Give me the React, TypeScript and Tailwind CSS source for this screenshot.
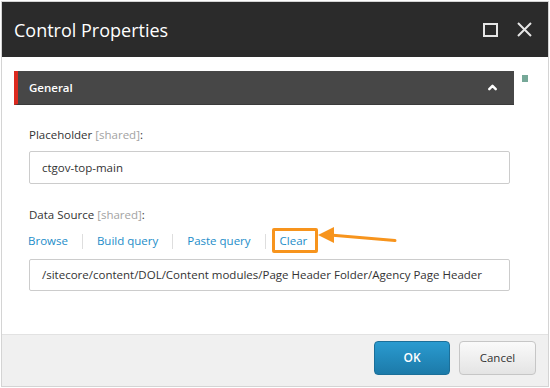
import { ChevronUp } from "lucide-react";

const font = { fontFamily: '"Open Sans", "Liberation Sans", sans-serif' };

function Label({ text }: { text: string }) {
  return (
    <div className="text-[11.5px] leading-[17px] text-[#333]">
      {text} <span className="text-[#a3a3a3]">[shared]</span>:
    </div>
  );
}

export default function App() {
  const links = ["Browse", "Build query", "Paste query", "Clear"];

  return (
    <div className="w-[550px] h-[388px] bg-white p-px" style={font}>
      <div className="h-full flex flex-col border border-[#d4d4d4]">
        {/* title bar */}
        <div className="h-[55px] bg-[#2b2b2b] flex items-center pl-3 pr-4">
          <div className="flex-1 text-white text-[18px] leading-none">Control Properties</div>
          <svg width="15" height="14" viewBox="0 0 15 14" className="mr-[19px]">
            <rect x="1" y="1" width="13" height="12" fill="none" stroke="#e6e6e6" strokeWidth="2" />
          </svg>
          <svg width="15" height="15" viewBox="0 0 15 15">
            <path d="M1 1 L14 14 M14 1 L1 14" stroke="#e6e6e6" strokeWidth="2" />
          </svg>
        </div>

        {/* body */}
        <div className="flex-1 bg-white pt-[14px] pl-3 flex items-start">
          <div className="w-[500px]">
            <div className="h-[34px] bg-[#474747] border-l-4 border-[#dc2a1f] border-b border-b-[#3a3a3a] flex items-center pl-[11px] pr-[15px]">
              <div className="flex-1 text-white text-[11.5px] font-semibold">General</div>
              <ChevronUp size={13} strokeWidth={4.5} color="#fff" />
            </div>

            <div className="pl-[15px] pr-[4px] pt-[21px]">
              <Label text="Placeholder" />
              <div className="mt-[8px] h-[33px] border border-[#cccccc] rounded-[2px] flex items-center pl-3 text-[11.5px] text-[#333]">
                ctgov-top-main
              </div>

              <div className="mt-[22px]">
                <Label text="Data Source" />
              </div>
              <div className="mt-[6px] h-[24px] flex items-center -ml-[1px]">
                {links.map((l, i) => (
                  <div key={l} className="flex items-center">
                    {i > 0 && <div className="w-px h-[15px] bg-[#dedede]" />}
                    <div
                      className={`text-[11.5px] text-[#1d8dc9] ${i === 0 ? "pr-[14px]" : "px-[14px]"}`}
                    >
                      <span className="relative">
                        {l}
                        {l === "Clear" && (
                          <>
                            <span className="absolute -left-[8px] -top-[5px] w-[46px] h-[25px] border-[3px] border-[#f7941d] rounded-[2px]" />
                            <svg
                              className="absolute left-[38px] -top-[8px]"
                              width="82"
                              height="24"
                              viewBox="0 0 82 24"
                            >
                              <path d="M0 10 L16 2 L16 18 Z" fill="#f7941d" />
                              <path d="M12 10 L77 15.5" stroke="#f7941d" strokeWidth="3" strokeLinecap="round" />
                            </svg>
                          </>
                        )}
                      </span>
                    </div>
                  </div>
                ))}
              </div>
              <div className="mt-[6px] h-[32px] border border-[#cccccc] rounded-[2px] flex items-center pl-3 text-[11.5px] text-[#333] whitespace-nowrap">
                /sitecore/content/DOL/Content modules/Page Header Folder/Agency Page Header
              </div>
            </div>
          </div>
          <div className="ml-2 mt-1 w-[6px] h-[7px] bg-[#76a898]" />
        </div>

        {/* footer */}
        <div className="h-[52px] bg-[#f0f0f0] border-t border-[#e2e2e2] flex justify-end items-start pt-[6px] pr-[12px] gap-[9px]">
          <button className="w-[76px] h-[34px] rounded-[4px] border border-[#1b6f99] bg-gradient-to-b from-[#2a9bd0] to-[#1c7aa9] text-white text-[12px] font-semibold">
            OK
          </button>
          <button className="w-[77px] h-[34px] rounded-[4px] border border-[#c6c6c6] bg-gradient-to-b from-[#fafafa] to-[#e4e4e4] text-[#333] text-[11.5px]">
            Cancel
          </button>
        </div>
      </div>
    </div>
  );
}
